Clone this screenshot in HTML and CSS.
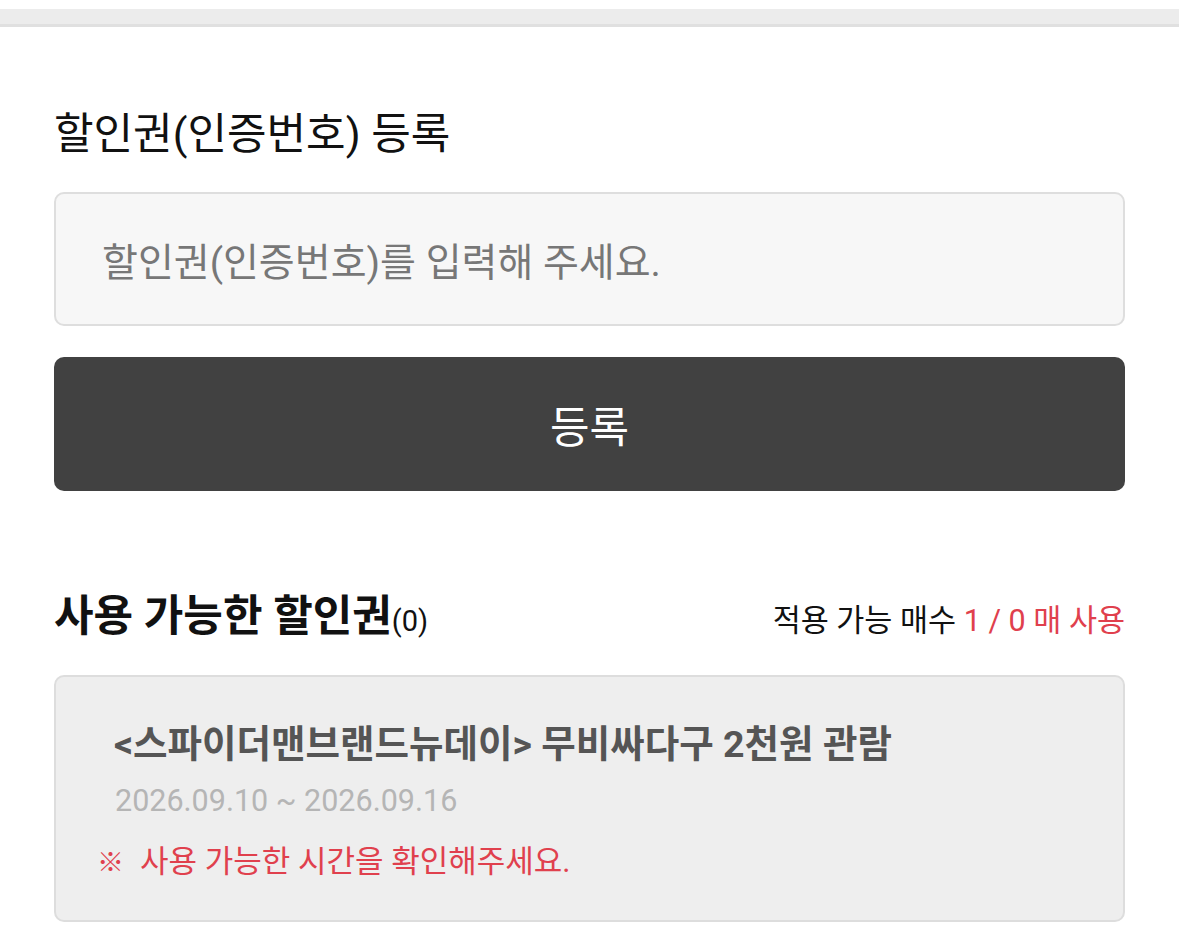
FILE: index.html
```html
<!DOCTYPE html>
<html lang="ko">
<head>
<meta charset="utf-8">
<link rel="stylesheet" href="styles.css">
</head>
<body>
<div class="topbar"></div>
<main class="content">
  <h2 class="reg-title">할인권(인증번호) 등록</h2>
  <div class="input-box"><span class="placeholder">할인권(인증번호)를 입력해 주세요.</span></div>
  <button class="reg-btn">등록</button>
  <div class="list-head">
    <h3 class="list-title">사용 가능한 할인권<span class="count">(0)</span></h3>
    <div class="apply">적용 가능 매수 <span class="red">1 / 0 매 사용</span></div>
  </div>
  <div class="card">
    <div class="card-title">&lt;스파이더맨브랜드뉴데이&gt; 무비싸다구 2천원 관람</div>
    <div class="card-date">2026.09.10 ~ 2026.09.16</div>
    <div class="card-warn"><span class="mark">※</span>사용 가능한 시간을 확인해주세요.</div>
  </div>
</main>
</body>
</html>
```
FILE: styles.css
```css
* { box-sizing: border-box; }
html, body { margin: 0; padding: 0; background: #fff; }
body {
  font-family: "Roboto", "Noto Sans CJK KR", sans-serif;
  color: #111;
  width: 1179px;
  height: 936px;
  overflow: hidden;
}
.topbar {
  margin-top: 9px;
  height: 18px;
  background: #ececec;
  border-bottom: 3px solid #e0e0e0;
}
.content {
  padding: 0 54px;
}
.reg-title {
  margin: 78px 0 0 0;
  height: 58px;
  font-size: 43px;
  font-weight: 400;
  line-height: 58px;
  color: #111;
}
.input-box {
  margin-top: 29px;
  height: 134px;
  background: #f7f7f7;
  border: 2px solid #dedede;
  border-radius: 10px;
  display: flex;
  align-items: center;
  padding-left: 46px;
}
.placeholder {
  font-size: 39px;
  color: #777;
}
.reg-btn {
  display: block;
  width: 100%;
  margin-top: 31px;
  height: 134px;
  background: #414141;
  border: none;
  border-radius: 10px;
  color: #fff;
  font-family: inherit;
  font-size: 43px;
}
.list-head {
  margin-top: 96px;
  height: 58px;
  display: flex;
  justify-content: space-between;
  align-items: baseline;
}
.list-title {
  margin: 0;
  font-size: 43px;
  font-weight: 700;
  line-height: 58px;
  color: #111;
}
.count {
  font-size: 29px;
  font-weight: 400;
}
.apply {
  font-size: 30.5px;
  color: #111;
}
.red { color: #e0404d; }
.card {
  margin-top: 30px;
  height: 247px;
  background: #eee;
  border: 2px solid #ddd;
  border-radius: 10px;
  padding: 43px 0 0 41px;
}
.card-title {
  margin-left: 17px;
  font-size: 37.5px;
  font-weight: 700;
  color: #555;
  line-height: 48px;
}
.card-date {
  margin-left: 18px;
  margin-top: 13px;
  font-size: 30.5px;
  color: #b5b5b5;
  line-height: 40px;
}
.card-warn {
  margin-top: 21px;
  font-size: 31px;
  color: #e0404d;
  line-height: 40px;
}
.mark {
  display: inline-block;
  width: 43px;
  font-size: 27px;
  font-weight: 700;
}
```
